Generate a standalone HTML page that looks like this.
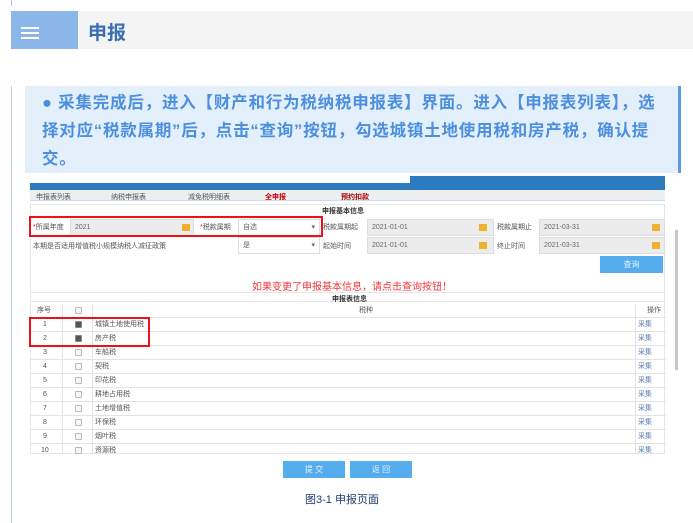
<!DOCTYPE html>
<html><head><meta charset="utf-8"><style>
*{margin:0;padding:0;box-sizing:border-box}
body{width:693px;height:523px;background:#fff;position:relative;overflow:hidden;font-family:"Liberation Sans","Noto Sans CJK SC",sans-serif}
.a{position:absolute}
.s{font-size:7px;color:#555;white-space:nowrap}
.inp{position:absolute;background:#ececec;border:1px solid #ddd;font-size:7px;color:#666;padding:0 4px;line-height:15px}
.cal{position:absolute;width:8px;height:7px;background:#f0b030}
.row{position:absolute;left:30px;width:636px;height:14px;border-bottom:1px solid #e3e3e3;font-size:7px;color:#555}
.row span{position:absolute;top:0;line-height:13px}
.cb{position:absolute;left:45px;top:3px;width:7px;height:7px;border:1px solid #bbb;border-radius:1px;background:#f6f6f6}
.ck{background:#555;border-color:#888}
</style></head><body>
<div class="a" style="left:11px;top:0;width:1px;height:6px;background:#a9c8ee"></div>
<div class="a" style="left:11px;top:11px;width:682px;height:38px;background:#f4f4f4"></div>
<div class="a" style="left:11px;top:11px;width:67px;height:38px;background:#8ab6e9"></div>
<div class="a" style="left:21px;top:27px;width:18px;height:2px;background:#fff;box-shadow:0 5px 0 #fff,0 10px 0 #fff"></div>
<div class="a" style="left:88px;top:18px;font-size:19px;font-weight:bold;color:#3a6db2">申报</div>
<div class="a" style="left:11px;top:86px;width:1px;height:437px;background:#bcd4f2"></div>
<div class="a" style="left:25px;top:86px;width:656px;height:87px;background:#e3f0fc;border-right:3px solid #5b9be6"></div>
<div class="a" style="left:42px;top:89px;font-size:16.5px;font-weight:bold;color:#4d8fdf;line-height:28px;white-space:nowrap;letter-spacing:0.8px">● 采集完成后，进入【财产和行为税纳税申报表】界面。进入【申报表列表】，选<br>择对应“税款属期”后，点击“查询”按钮，勾选城镇土地使用税和房产税，确认提<br>交。</div>

<div class="a" style="left:30px;top:183px;width:635px;height:7px;background:#2d7bbf"></div>
<div class="a" style="left:410px;top:176px;width:255px;height:14px;background:#2d7bbf"></div>
<div class="a" style="left:30px;top:190px;width:635px;height:11px;background:#eceff2;border-bottom:1px solid #c8ddf0"></div>
<div class="a s" style="left:36px;top:192px">申报表列表</div>
<div class="a s" style="left:111px;top:192px">纳税申报表</div>
<div class="a s" style="left:188px;top:192px">减免税明细表</div>
<div class="a s" style="left:265px;top:192px;color:#c00;font-weight:bold">全申报</div>
<div class="a s" style="left:341px;top:192px;color:#a00;font-weight:bold">预约扣款</div>
<div class="a" style="left:30px;top:204px;width:635px;height:98px;border:1px solid #e6e6e6"></div>
<div class="a s" style="left:322px;top:206px;color:#333;font-weight:bold">申报基本信息</div>
<div class="a s" style="left:33px;top:222px"><span style="color:red">*</span>所属年度</div>
<div class="inp" style="left:70px;top:219px;width:124px;height:17px">2021</div><div class="cal" style="left:182px;top:224px"></div>
<div class="a s" style="left:200px;top:222px"><span style="color:red">*</span>税款属期</div>
<div class="inp" style="left:238px;top:219px;width:82px;height:17px;background:#fff">自选<span style="position:absolute;right:4px">▾</span></div>
<div class="a s" style="left:323px;top:222px">税款属期起</div>
<div class="inp" style="left:367px;top:219px;width:127px;height:17px">2021-01-01</div><div class="cal" style="left:479px;top:224px"></div>
<div class="a s" style="left:497px;top:222px">税款属期止</div>
<div class="inp" style="left:539px;top:219px;width:126px;height:17px">2021-03-31</div><div class="cal" style="left:652px;top:224px"></div>
<div class="a s" style="left:33px;top:241px">本期是否适用增值税小规模纳税人减征政策</div>
<div class="inp" style="left:238px;top:237px;width:82px;height:17px;background:#fff">是<span style="position:absolute;right:4px">▾</span></div>
<div class="a s" style="left:323px;top:241px">起始时间</div>
<div class="inp" style="left:367px;top:237px;width:127px;height:17px">2021-01-01</div><div class="cal" style="left:479px;top:242px"></div>
<div class="a s" style="left:497px;top:241px">终止时间</div>
<div class="inp" style="left:539px;top:237px;width:126px;height:17px">2021-03-31</div><div class="cal" style="left:652px;top:242px"></div>
<div class="a" style="left:600px;top:256px;width:63px;height:17px;background:#55adee;color:#e8f4ff;font-size:8px;text-align:center;line-height:17px">查询</div>
<div class="a" style="left:29px;top:216px;width:294px;height:21px;border:2px solid #e8141c"></div>
<div class="a" style="left:252px;top:278px;font-size:10px;color:#f2373b;white-space:nowrap">如果变更了申报基本信息，请点击查询按钮！</div>
<div class="a" style="left:30px;top:292px;width:635px;height:162px;border:1px solid #e6e6e6"></div>
<div class="a s" style="left:332px;top:294px;color:#333;font-weight:bold">申报表信息</div>
<div class="row" style="top:304px"><span style="left:7px">序号</span><div class="cb"></div><span style="left:329px">税种</span><span style="left:617px">操作</span></div>
<div class="a" style="left:62px;top:304px;width:1px;height:150px;background:#e3e3e3"></div>
<div class="a" style="left:92px;top:304px;width:1px;height:150px;background:#e3e3e3"></div>
<div class="a" style="left:635px;top:304px;width:1px;height:150px;background:#e3e3e3"></div>
<div class="row" style="top:318px"><span style="left:13px">1</span><div class="cb ck"></div><span style="left:65px">城镇土地使用税</span><span style="left:608px;color:#5b7fb5">采集</span></div>
<div class="row" style="top:332px"><span style="left:13px">2</span><div class="cb ck"></div><span style="left:65px">房产税</span><span style="left:608px;color:#5b7fb5">采集</span></div>
<div class="row" style="top:346px"><span style="left:13px">3</span><div class="cb"></div><span style="left:65px">车船税</span><span style="left:608px;color:#5b7fb5">采集</span></div>
<div class="row" style="top:360px"><span style="left:13px">4</span><div class="cb"></div><span style="left:65px">契税</span><span style="left:608px;color:#5b7fb5">采集</span></div>
<div class="row" style="top:374px"><span style="left:13px">5</span><div class="cb"></div><span style="left:65px">印花税</span><span style="left:608px;color:#5b7fb5">采集</span></div>
<div class="row" style="top:388px"><span style="left:13px">6</span><div class="cb"></div><span style="left:65px">耕地占用税</span><span style="left:608px;color:#5b7fb5">采集</span></div>
<div class="row" style="top:402px"><span style="left:13px">7</span><div class="cb"></div><span style="left:65px">土地增值税</span><span style="left:608px;color:#5b7fb5">采集</span></div>
<div class="row" style="top:416px"><span style="left:13px">8</span><div class="cb"></div><span style="left:65px">环保税</span><span style="left:608px;color:#5b7fb5">采集</span></div>
<div class="row" style="top:430px"><span style="left:13px">9</span><div class="cb"></div><span style="left:65px">烟叶税</span><span style="left:608px;color:#5b7fb5">采集</span></div>
<div class="row" style="top:444px;border-bottom:none"><span style="left:11px">10</span><div class="cb"></div><span style="left:65px">资源税</span><span style="left:608px;color:#5b7fb5">采集</span></div>
<div class="a" style="left:29px;top:317px;width:121px;height:30px;border:2px solid #e8141c"></div>
<div class="a" style="left:283px;top:461px;width:62px;height:17px;background:#55adee;color:#e8f4ff;font-size:8px;text-align:center;line-height:17px">提 交</div>
<div class="a" style="left:350px;top:461px;width:62px;height:17px;background:#55adee;color:#e8f4ff;font-size:8px;text-align:center;line-height:17px">返 回</div>
<div class="a" style="left:675px;top:230px;width:3px;height:140px;background:#c8c8c8"></div>
<div class="a" style="left:305px;top:491px;font-size:11px;color:#1f3a70;white-space:nowrap">图3-1 申报页面</div>
</body></html>
